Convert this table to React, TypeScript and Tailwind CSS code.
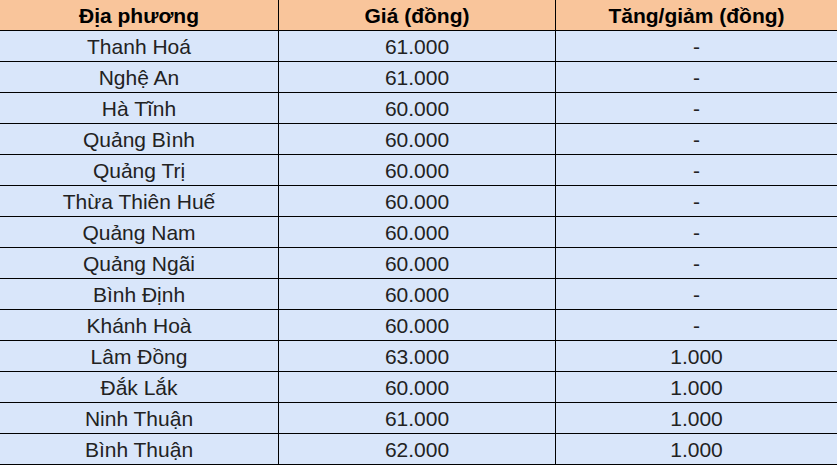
const rows: [string, string, string][] = [
  ["Thanh Hoá", "61.000", "-"],
  ["Nghệ An", "61.000", "-"],
  ["Hà Tĩnh", "60.000", "-"],
  ["Quảng Bình", "60.000", "-"],
  ["Quảng Trị", "60.000", "-"],
  ["Thừa Thiên Huế", "60.000", "-"],
  ["Quảng Nam", "60.000", "-"],
  ["Quảng Ngãi", "60.000", "-"],
  ["Bình Định", "60.000", "-"],
  ["Khánh Hoà", "60.000", "-"],
  ["Lâm Đồng", "63.000", "1.000"],
  ["Đắk Lắk", "60.000", "1.000"],
  ["Ninh Thuận", "61.000", "1.000"],
  ["Bình Thuận", "62.000", "1.000"],
];

function Row({ cells, head }: { cells: string[]; head?: boolean }) {
  return (
    <div
      className={
        "flex h-[31px] border-b border-black text-center text-[21px] leading-[29px] " +
        (head ? "bg-[#f9c59b] font-bold text-black" : "bg-[#d9e6fa] text-[#222]")
      }
    >
      <div className="w-[279px] border-r border-black pt-px">{cells[0]}</div>
      <div className="w-[277px] border-r border-black pt-px">{cells[1]}</div>
      <div className="flex-1 pt-px">{cells[2]}</div>
    </div>
  );
}

export default function App() {
  return (
    <div className="h-[467px] w-[837px] bg-white" style={{ fontFamily: '"Liberation Sans", Arial, sans-serif' }}>
      <Row head cells={["Địa phương", "Giá (đồng)", "Tăng/giảm (đồng)"]} />
      {rows.map((r) => (
        <Row key={r[0]} cells={r} />
      ))}
    </div>
  );
}
